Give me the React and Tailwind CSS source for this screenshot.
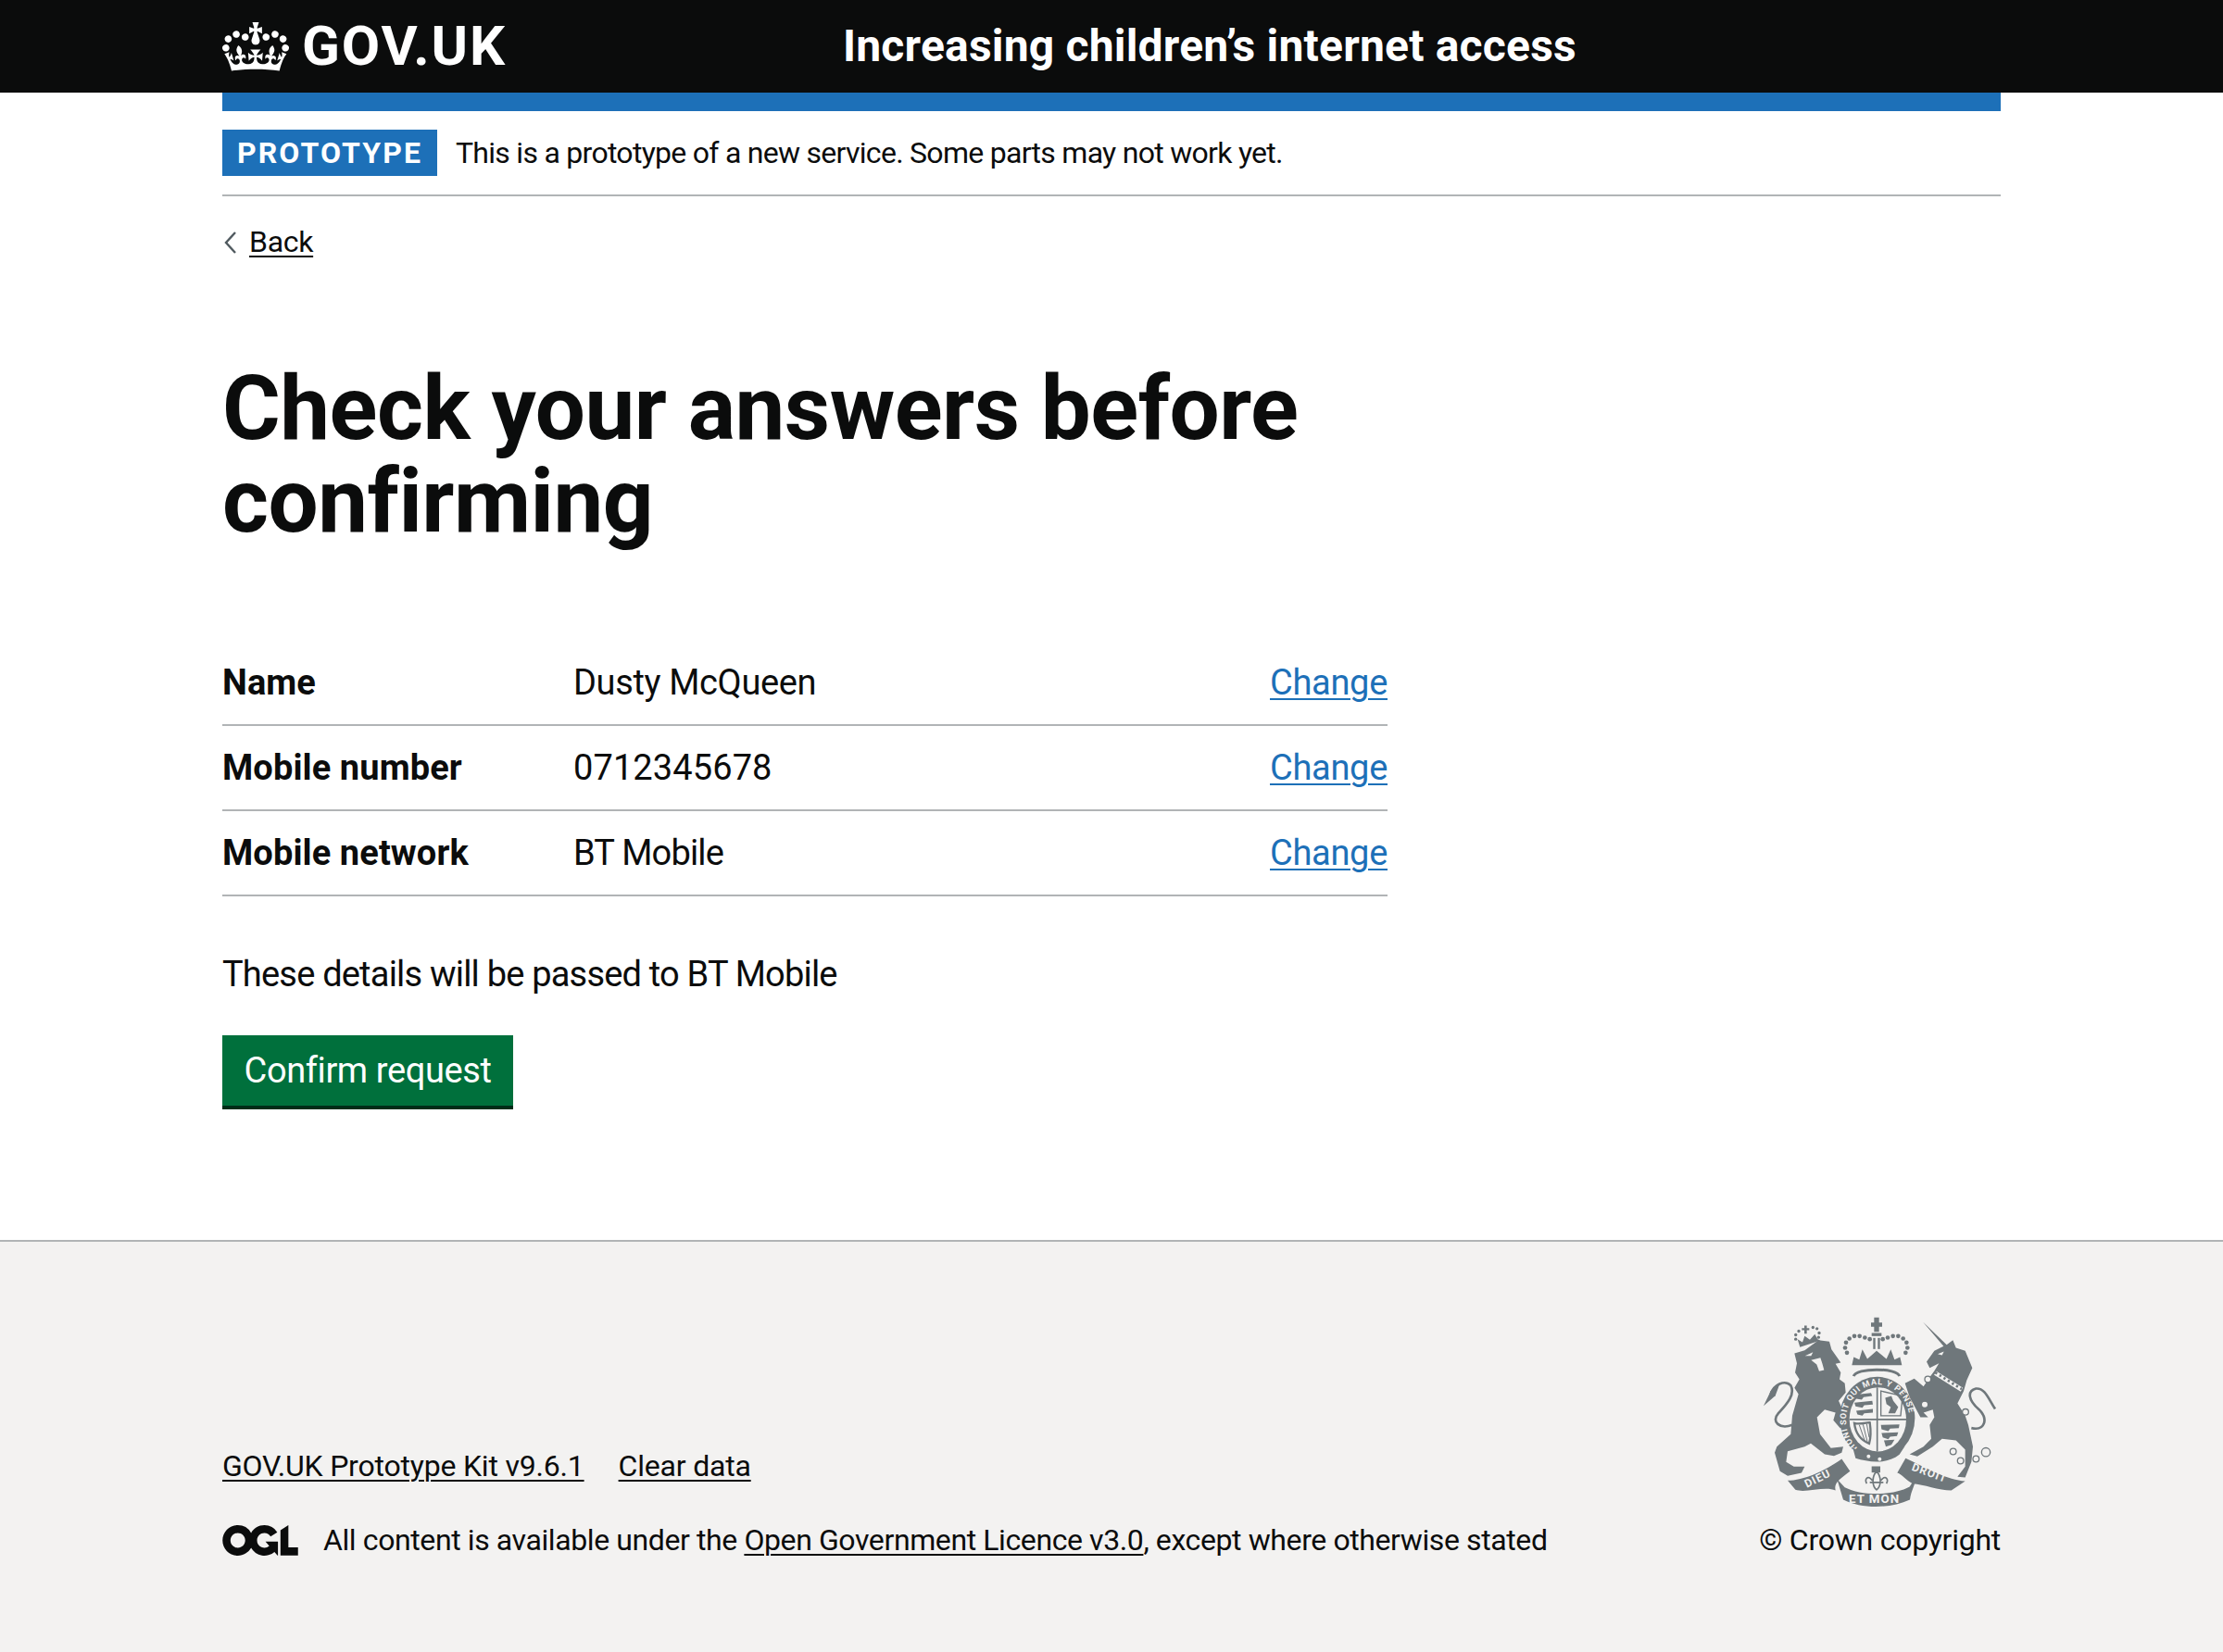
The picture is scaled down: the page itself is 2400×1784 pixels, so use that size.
const rows = [
  { label: 'Name', value: 'Dusty McQueen', tracking: 'tracking-[-0.35px]' },
  { label: 'Mobile number', value: '0712345678', tracking: 'tracking-[0.1px]' },
  { label: 'Mobile network', value: 'BT Mobile', tracking: 'tracking-[-0.8px]' },
];

function Crown() {
  return (
    <svg viewBox="0 0 132 97" className="w-[72px] h-[53px] shrink-0" aria-hidden="true">
      <path fill="currentColor" fillRule="evenodd" d="M25 30.2c3.5 1.5 7.7-.2 9.1-3.7 1.5-3.6-.2-7.8-3.9-9.2-3.6-1.4-7.6.3-9.1 3.9-1.4 3.5.3 7.5 3.9 9zM9 39.5c3.6 1.5 7.8-.2 9.2-3.7 1.5-3.6-.2-7.8-3.9-9.1-3.6-1.5-7.6.2-9.1 3.8-1.4 3.5.3 7.5 3.8 9zM4.4 57.2c3.5 1.5 7.7-.2 9.1-3.8 1.5-3.6-.2-7.7-3.9-9.1-3.5-1.5-7.6.3-9.1 3.8-1.4 3.5.3 7.6 3.9 9.1zm38.3-21.4c3.5 1.5 7.7-.2 9.1-3.8 1.5-3.6-.2-7.7-3.9-9.1-3.6-1.5-7.6.3-9.1 3.8-1.3 3.6.4 7.7 3.9 9.1zm64.4-5.6c-3.6 1.5-7.8-.2-9.1-3.7-1.5-3.6.2-7.8 3.8-9.2 3.6-1.4 7.7.3 9.2 3.9 1.3 3.5-.4 7.5-3.9 9zm15.9 9.3c-3.6 1.5-7.7-.2-9.1-3.7-1.5-3.6.2-7.8 3.7-9.1 3.6-1.5 7.7.2 9.2 3.8 1.5 3.5-.3 7.5-3.8 9zm4.7 17.7c-3.6 1.5-7.8-.2-9.2-3.8-1.5-3.6.2-7.7 3.9-9.1 3.6-1.5 7.7.3 9.2 3.8 1.3 3.5-.4 7.6-3.9 9.1zM89.3 35.8c-3.6 1.5-7.8-.2-9.2-3.8-1.4-3.6.2-7.7 3.9-9.1 3.6-1.5 7.7.3 9.2 3.8 1.4 3.6-.3 7.7-3.9 9.1zM69.7 17.7l8.9 4.7V9.3l-8.9 2.8c-.2-.3-.5-.6-.9-.9L72.4 0H59.6l3.5 11.2c-.3.3-.6.5-.9.9l-8.8-2.8v13.1l8.8-4.7c.3.3.6.7.9.9l-5 15.4v.1c-.2.8-.4 1.6-.4 2.4 0 4.1 3.1 7.5 7 8.1h.2c.3 0 .7.1 1 .1.4 0 .7 0 1-.1h.2c4-.6 7.1-4.1 7.1-8.1 0-.8-.1-1.7-.4-2.4V34l-5.1-15.4c.4-.2.7-.6 1-.9zM66 92.8c16.9 0 32.8 1.1 47.1 3.2 4-16.9 8.9-26.7 14-33.5l-9.6-3.4c1 4.9 1.1 7.2 0 10.2-1.5-1.4-3-4.3-4.2-8.7L108.6 76c2.8-2 5-3.2 7.5-3.3-4.4 9.4-10 11.9-13.6 11.2-4.3-.8-6.3-4.6-5.6-7.9 1-4.7 5.7-5.9 8-.5 4.3-8.7-3-11.4-7.6-8.8 7.1-7.2 7.9-13.5 2.1-21.1-8 6.1-8.1 12.3-4.5 20.8-4.7-5.4-12.1-2.5-9.5 6.2 3.4-5.2 7.9-2 7.2 3.1-.6 4.3-6.4 7.8-13.5 7.2-10.3-.9-10.9-8-11.2-13.8 2.5-.5 7.1 1.8 11 7.3L80.2 60c-4.1 4.4-8 5.3-12.3 5.4 1.4-4.4 8-11.6 8-11.6H55.5s6.4 7.2 7.9 11.6c-4.2-.1-8-1-12.3-5.4l1.4 16.4c3.9-5.5 8.5-7.7 10.9-7.3-.3 5.8-.9 12.8-11.1 13.8-7.2.6-12.9-2.9-13.5-7.2-.7-5 3.8-8.3 7.1-3.1 2.7-8.7-4.6-11.6-9.4-6.2 3.7-8.5 3.6-14.7-4.6-20.8-5.8 7.6-5 13.9 2.2 21.1-4.7-2.6-11.9.1-7.7 8.8 2.3-5.5 7.1-4.2 8.1.5.7 3.3-1.3 7.1-5.7 7.9-3.5.7-9-1.8-13.5-11.2 2.5.1 4.7 1.3 7.5 3.3l-4.7-15.4c-1.2 4.4-2.7 7.2-4.3 8.7-1.1-3-.9-5.3 0-10.2l-9.5 3.4c5 6.9 9.9 16.7 14 33.5 14.8-2.1 30.8-3.2 47.7-3.2z" />
    </svg>
  );
}

function OglLogo() {
  return (
    <svg viewBox="0 0 483.2 195.7" className="w-[82px] h-[33px] shrink-0" aria-hidden="true">
      <path fill="currentColor" d="M421.5 142.8V.1l-50.7 32.3v161.1h112.4v-50.7zm-122.3-9.6A47.12 47.12 0 0 1 221 97.8c0-26 21.1-47.1 47.1-47.1 16.7 0 31.4 8.7 39.7 21.8l42.7-27.2A97.63 97.63 0 0 0 268.1 0c-36.5 0-68.3 20.1-85.1 49.7A98 98 0 0 0 97.8 0C43.9 0 0 43.9 0 97.8s43.9 97.8 97.8 97.8c36.5 0 68.3-20.1 85.1-49.7a97.76 97.76 0 0 0 149.6 25.4l19.4 22.2h3v-87.8h-80l24.3 27.5zM97.8 145c-26 0-47.1-21.1-47.1-47.1s21.1-47.1 47.1-47.1 47.2 21 47.2 47S123.8 145 97.8 145" />
    </svg>
  );
}

// Royal coat of arms, drawn by hand. Coordinates are 3x page pixels.
function Crest() {
  const ink = '#6f777b';
  const paper = '#f3f2f1';
  const arch = [[342, 176], [336, 160], [339, 143], [350, 130], [366, 122], [383, 122], [400, 127], [416, 132], [458, 132], [474, 127], [491, 122], [508, 122], [524, 130], [535, 143], [538, 160], [532, 176]];
  const smallArch = [[176, 132], [176, 118], [186, 106], [232, 94], [245, 98], [252, 112], [250, 126]];
  const rings = [[604, 262, 10], [594, 344, 11], [726, 368, 10], [686, 496, 10], [710, 526, 10], [760, 520, 10], [792, 498, 14]];
  const beasts = ['M366 312 L420 306 L424 316 L396 320 L390 328 L368 324 Z', 'M366 338 L424 332 L426 344 L398 346 L392 354 L370 350 Z', 'M372 364 L426 358 L426 370 L398 372 L392 380 L376 376 Z', 'M452 410 L512 408 L510 420 L482 422 L476 430 L454 424 Z', 'M454 436 L508 434 L504 446 L482 448 L476 456 L458 450 Z', 'M462 460 L496 458 L486 474 L468 480 Z'];
  return (
    <svg viewBox="60 60 780 620" className="w-[260px] h-[207px]" aria-hidden="true">
      <defs>
        <path id="garter" d="M376 484 A103 116 0 1 1 512 480" />
      </defs>

      {/* lion */}
      <path fill={ink} d="M172 178 L205 168 L250 135 L285 140 L292 165 L322 208 L305 212 L322 240 L318 262 L335 275 L338 305 L315 332 L335 375 L345 410 L320 420 L298 395 L305 370 L270 360 L245 385 L255 440 L290 485 L330 480 L325 500 L300 510 L270 505 L225 470 L205 480 L150 495 L145 530 L170 545 L205 545 L195 565 L150 575 L125 560 L108 500 L115 480 L160 440 L165 380 L185 310 L172 290 L188 262 L174 240 L180 210 Z" />
      <path fill="none" stroke={ink} strokeWidth="8" d="M165 410 C125 425 95 400 120 372 C150 340 175 310 160 282 C140 262 105 280 95 310" />
      <path fill={ink} d="M72 348 L95 300 L125 275 L110 315 Z" />
      <path fill={paper} d="M206 186 L232 174 L226 186 Z M226 200 L256 192 L262 210 L268 232 L252 236 L244 214 Z" />
      {/* lion's crown */}
      <path fill={ink} d="M190 158 L182 132 L198 142 L205 122 L222 134 L238 116 L247 132 L256 136 Z" />
      {smallArch.map(([cx, cy]) => (
        <circle key={cx} cx={cx} cy={cy} r="5" fill={ink} />
      ))}
      <path fill={ink} d="M204 88 H212 V96 H220 V103 H212 V114 H204 V103 H196 V96 H204 Z" />

      {/* unicorn */}
      <path fill={ink} d="M588 76 L665 150 L685 135 L695 160 L725 170 L748 225 L730 265 L720 300 L700 340 L725 380 L735 410 L750 480 L745 530 L725 580 L700 578 L725 545 L725 490 L695 460 L650 455 L620 480 L570 512 L545 505 L590 480 L615 455 L610 410 L625 385 L620 360 L590 370 L605 385 L580 385 L545 320 L530 275 L560 260 L590 285 L610 255 L625 235 L640 210 L610 225 L600 205 L625 170 L655 155 Z" />
      <path fill="none" stroke={ink} strokeWidth="8" d="M745 420 C790 430 800 390 770 360 C735 330 730 300 760 292 C790 290 800 325 822 358" />
      <path fill="none" stroke={paper} strokeWidth="14" d="M628 242 L714 296" />
      <path fill="none" stroke={ink} strokeWidth="8" strokeDasharray="7 9" d="M628 240 L714 294" />
      <path fill={paper} d="M636 180 L656 172 L650 184 Z" />
      {rings.map(([cx, cy, r]) => (
        <circle key={cx} cx={cx} cy={cy} r={r} fill={paper} stroke={ink} strokeWidth="4" />
      ))}

      {/* royal crown over the shield */}
      <path fill={ink} d="M430 62 H446 V78 H456 V92 H446 V108 H430 V92 H420 V78 H430 Z" />
      <rect x="422" y="112" width="32" height="10" fill={ink} />
      <rect x="427" y="128" width="7" height="36" fill={ink} />
      <rect x="442" y="128" width="7" height="36" fill={ink} />
      {arch.map(([cx, cy]) => (
        <circle key={cx} cx={cx} cy={cy} r="7" fill={ink} />
      ))}
      <path fill={ink} d="M358 216 L364 190 L382 198 L392 165 L408 196 L438 170 L470 196 L484 165 L496 198 L514 190 L520 216 Z" />
      <path fill="none" stroke={ink} strokeWidth="9" d="M364 252 C370 224 506 224 512 252" />

      {/* garter and shield */}
      <ellipse cx="440" cy="388" rx="122" ry="134" fill={ink} />
      <ellipse cx="442" cy="392" rx="92" ry="104" fill={paper} />
      <text className="font-[Roboto,sans-serif] font-bold" fontSize="27" letterSpacing="2.5" fill={paper}>
        <textPath href="#garter">HONI SOIT QUI MAL Y PENSE</textPath>
      </text>
      <path fill="none" stroke={ink} strokeWidth="5" d="M440 288 V496 M350 392 H534" />
      {beasts.map((d) => (
        <path key={d} fill={ink} d={d} />
      ))}
      {/* scottish lion */}
      <path fill="none" stroke={ink} strokeWidth="4" d="M452 300 L522 316 L516 380 H452 Z" />
      <path fill={ink} d="M466 322 L486 316 L492 332 L508 352 L498 372 L476 372 L484 352 L470 342 Z" />
      {/* harp */}
      <path fill="none" stroke={ink} strokeWidth="7" d="M366 404 C386 410 410 400 416 402 C420 430 420 450 414 470 C390 460 370 440 366 404 Z" />
      <path fill="none" stroke={ink} strokeWidth="3" d="M382 410 L400 462 M394 408 L408 464 M406 406 L414 450" />
      <path fill={ink} d="M360 480 C400 520 480 525 530 478 L512 506 C470 540 410 530 370 518 Z" />
      <circle cx="412" cy="512" r="6" fill={paper} />
      <circle cx="448" cy="521" r="6" fill={paper} />

      {/* motto ribbons */}
      <path fill={ink} d="M150 590 C200 590 270 560 325 520 L352 560 C312 590 300 600 305 622 C270 606 210 632 175 620 Z" />
      <path fill={ink} d="M310 585 L335 612 C390 640 490 640 545 610 L566 578 C562 610 550 622 546 652 C480 682 390 682 330 652 Z" />
      <path fill={ink} d="M532 518 C600 550 670 590 725 592 L680 622 C640 622 590 602 555 600 C535 590 520 570 505 565 Z" />
      <text className="font-[Roboto,sans-serif] font-bold" fontSize="36" fill={paper} transform="translate(212 614) rotate(-26)" letterSpacing="3">DIEU</text>
      <text className="font-[Roboto,sans-serif] font-bold" fontSize="40" fill={paper} x="348" y="662" letterSpacing="3">ET MON</text>
      <text className="font-[Roboto,sans-serif] font-bold" fontSize="36" fill={paper} transform="translate(550 556) rotate(20)" letterSpacing="3">DROIT</text>

      {/* fleur-de-lis under the shield */}
      <rect x="422" y="544" width="28" height="20" fill={ink} />
      <path fill="none" stroke={ink} strokeWidth="5" d="M438 560 C420 580 425 610 438 620 C452 610 456 580 438 560 Z M424 590 C410 570 398 585 406 600 M452 590 C466 570 478 585 470 600 M416 596 H460" />
    </svg>
  );
}

export default function App() {
  return (
    <div className="min-h-[1784px] flex flex-col bg-white text-[#0b0c0c] font-[Roboto,sans-serif]">
      <header className="h-[100px] bg-[#0b0c0c] text-white px-[240px] flex items-center">
        <a className="w-[670px] flex items-center gap-[14px] text-[60px] font-bold leading-none tracking-[1.9px]">
          <Crown />
          <span>GOV.UK</span>
        </a>
        <span className="text-[48px] font-bold leading-none tracking-[0.2px]">Increasing children’s internet access</span>
      </header>

      <main className="px-[240px] flex-1">
        <div className="h-5 bg-[#1d70b8]" />

        <div className="pt-5 pb-5 flex items-center gap-[20px] border-b-2 border-[#b1b4b6] text-[32px] tracking-[-0.72px]">
          <strong className="w-[232px] h-[50px] flex items-center justify-center bg-[#1d70b8] text-white font-bold tracking-[2.1px] leading-none">PROTOTYPE</strong>
          <span className="leading-[40px]">This is a prototype of a new service. Some parts may not work yet.</span>
        </div>

        <a className="mt-[29px] flex items-center gap-[14px] text-[32px] leading-[40px] tracking-[-0.3px]">
          <svg viewBox="0 0 15 24" className="w-[15px] h-6 translate-y-px text-[#505a5f]" aria-hidden="true">
            <path d="M14 1 L4 12 L14 23" fill="none" stroke="currentColor" strokeWidth="2.4" />
          </svg>
          <span className="underline decoration-2 underline-offset-4">Back</span>
        </a>

        <h1 className="mt-[110px] w-[1260px] text-[96px] font-bold leading-[100px] tracking-[-0.5px]">
          Check your answers before confirming
        </h1>

        <dl className="mt-[101px] w-[1258px] text-[38px]">
          {rows.map(({ label, value, tracking }) => (
            <div key={label} className="flex py-5 border-b-2 border-[#b1b4b6] leading-[50px]">
              <dt className="w-[379px] font-bold tracking-[0.1px]">{label}</dt>
              <dd className={`flex-1 ${tracking}`}>{value}</dd>
              <dd className="tracking-[-0.3px]"><a className="text-[#1d70b8] underline decoration-2 underline-offset-4">Change</a></dd>
            </div>
          ))}
        </dl>

        <p className="mt-[59px] text-[38px] leading-[50px] tracking-[-0.8px]">These details will be passed to BT Mobile</p>

        <button className="mt-[41px] w-[314px] h-[76px] bg-[#00703c] text-white text-[38px] leading-[50px] tracking-[-0.4px] shadow-[0_4px_0_#002d18]">
          Confirm request
        </button>
      </main>

      <footer className="h-[445px] border-t-2 border-[#b1b4b6] bg-[#f3f2f1] px-[240px] pb-[101px] flex items-end justify-between text-[32px] leading-[40px]">
        <div>
          <div className="flex gap-[37px] tracking-[-0.2px]">
            <a className="underline decoration-2 underline-offset-4">GOV.UK Prototype Kit v9.6.1</a>
            <a className="underline decoration-2 underline-offset-4">Clear data</a>
          </div>
          <div className="mt-10 flex items-center gap-[27px] tracking-[-0.4px]">
            <OglLogo />
            <span>
              All content is available under the{' '}
              <a className="underline decoration-2 underline-offset-4">Open Government Licence v3.0</a>, except where otherwise stated
            </span>
          </div>
        </div>
        <div className="flex flex-col items-end gap-[14px] tracking-[-0.25px]">
          <Crest />
          <span>© Crown copyright</span>
        </div>
      </footer>
    </div>
  );
}
